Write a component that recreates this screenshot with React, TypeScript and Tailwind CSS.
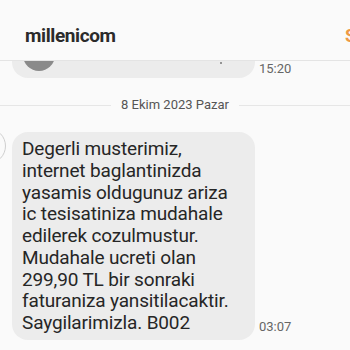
const lines = [
  'Degerli musterimiz,',
  'internet baglantinizda',
  'yasamis oldugunuz ariza',
  'ic tesisatiniza mudahale',
  'edilerek cozulmustur.',
  'Mudahale ucreti olan',
  '299,90 TL bir sonraki',
  'faturaniza yansitilacaktir.',
  'Saygilarimizla. B002',
]

export default function App() {
  return (
    <div className="w-[350px] h-[350px] overflow-hidden bg-[#fafafa] font-['Roboto',sans-serif]">
      {/* header */}
      <div className="h-[61px] flex items-start justify-between border-b border-[#e4e4e4] pl-[25px]">
        <h1 className="mt-[22px] text-[19px] font-bold text-[#2b2b2b] tracking-[-0.4px]">millenicom</h1>
        <span className="mt-[22px] text-[18px] font-bold text-[#ee9a44] -mr-[6px]">S</span>
      </div>

      {/* previous message, cut off by header */}
      <div className="flex items-end h-[17px]">
        <div className="ml-[12px] w-[243px] h-[17px] overflow-hidden rounded-b-[16px] bg-[#ececec] relative">
          <div className="absolute left-[11px] -top-[22px] w-[32px] h-[32px] rounded-full bg-[#8a8a8a]" />
          <div className="absolute left-[208px] top-[1px] w-[2px] h-[2px] rounded-full bg-[#777]" />
        </div>
        <span className="ml-[4px] mb-[1px] text-[13px] leading-[16px] text-[#666]">15:20</span>
      </div>

      {/* date separator */}
      <div className="mt-[18px] flex items-center gap-[10px]">
        <div className="flex-1 h-px bg-[#e6e6e6]" />
        <span className="text-[13px] leading-[18px] text-[#555]">8 Ekim 2023 Pazar</span>
        <div className="flex-1 h-px bg-[#e6e6e6]" />
      </div>

      {/* message */}
      <div className="mt-[18px] flex items-end">
        <div className="relative">
          <div className="absolute -left-[30px] top-[-4px] w-[36px] h-[36px] rounded-full border border-[#cfcfcf]" />
          <div className="ml-[12px] w-[243px] rounded-[16px] bg-[#ececec] pl-[10px] pt-[6px] pb-[6px] text-[19px] leading-[21.75px] tracking-[-0.15px] text-[#262626]">
            {lines.map((l) => (
              <div key={l} className="whitespace-nowrap">{l}</div>
            ))}
          </div>
        </div>
        <span className="ml-[4px] mb-[5px] text-[13px] leading-[16px] text-[#666]">03:07</span>
      </div>
    </div>
  )
}
